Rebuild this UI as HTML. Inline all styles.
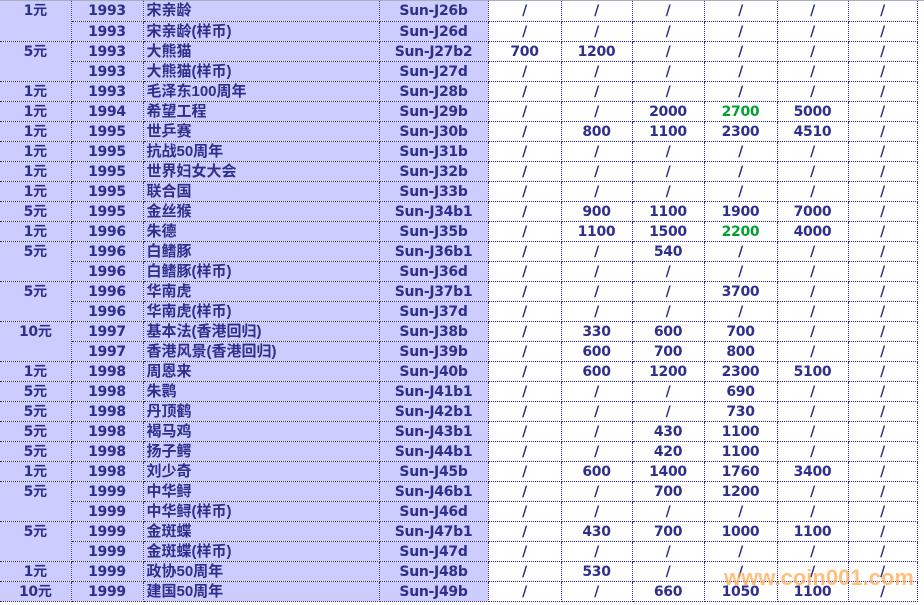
<!DOCTYPE html>
<html><head><meta charset="utf-8"><style>
body{margin:0;width:924px;height:605px;overflow:hidden;background:#fff;position:relative;font-family:"DejaVu Sans","Noto Sans CJK SC",sans-serif}
.top{position:absolute;left:0;top:0;width:924px;height:1px;background:#a8b0c0}
table{position:absolute;left:0;top:1px;border-collapse:collapse;table-layout:fixed}
tr{height:20px}
td{height:18px;padding:1px 0 0 0;border:1px dotted #2a2a9a;font-weight:bold;font-size:14px;color:#2e2e8c;text-align:center;line-height:18px;white-space:nowrap;overflow:hidden;letter-spacing:-0.3px}
td.l{background:#ccccff}
td.n{text-align:left;padding-left:3px;font-family:"Liberation Sans","Noto Sans CJK SC",sans-serif;font-size:15px;letter-spacing:0}
.g{color:#00a030}
tr td:first-child{border-left:none}
tr:first-child td{border-top:none}
.wm{position:absolute;left:724px;top:565px;width:190px;font-size:22px;font-weight:bold;color:rgba(255,165,70,0.7);font-family:"Liberation Sans",sans-serif;white-space:nowrap}
</style></head><body>
<div class="top"></div>
<table>
<colgroup><col style="width:71px"><col style="width:72px"><col style="width:236px"><col style="width:109px"><col style="width:73px"><col style="width:71px"><col style="width:72px"><col style="width:73px"><col style="width:71px"><col style="width:69px"></colgroup>
<tr><td class="l" rowspan="2" style="vertical-align:top">1元</td><td class="l">1993</td><td class="l n">宋亲龄</td><td class="l">Sun-J26b</td><td>/</td><td>/</td><td>/</td><td>/</td><td>/</td><td>/</td></tr>
<tr><td class="l">1993</td><td class="l n">宋亲龄(样币)</td><td class="l">Sun-J26d</td><td>/</td><td>/</td><td>/</td><td>/</td><td>/</td><td>/</td></tr>
<tr><td class="l" rowspan="2" style="vertical-align:top">5元</td><td class="l">1993</td><td class="l n">大熊猫</td><td class="l">Sun-J27b2</td><td>700</td><td>1200</td><td>/</td><td>/</td><td>/</td><td>/</td></tr>
<tr><td class="l">1993</td><td class="l n">大熊猫(样币)</td><td class="l">Sun-J27d</td><td>/</td><td>/</td><td>/</td><td>/</td><td>/</td><td>/</td></tr>
<tr><td class="l">1元</td><td class="l">1993</td><td class="l n">毛泽东100周年</td><td class="l">Sun-J28b</td><td>/</td><td>/</td><td>/</td><td>/</td><td>/</td><td>/</td></tr>
<tr><td class="l">1元</td><td class="l">1994</td><td class="l n">希望工程</td><td class="l">Sun-J29b</td><td>/</td><td>/</td><td>2000</td><td class="g">2700</td><td>5000</td><td>/</td></tr>
<tr><td class="l">1元</td><td class="l">1995</td><td class="l n">世乒赛</td><td class="l">Sun-J30b</td><td>/</td><td>800</td><td>1100</td><td>2300</td><td>4510</td><td>/</td></tr>
<tr><td class="l">1元</td><td class="l">1995</td><td class="l n">抗战50周年</td><td class="l">Sun-J31b</td><td>/</td><td>/</td><td>/</td><td>/</td><td>/</td><td>/</td></tr>
<tr><td class="l">1元</td><td class="l">1995</td><td class="l n">世界妇女大会</td><td class="l">Sun-J32b</td><td>/</td><td>/</td><td>/</td><td>/</td><td>/</td><td>/</td></tr>
<tr><td class="l">1元</td><td class="l">1995</td><td class="l n">联合国</td><td class="l">Sun-J33b</td><td>/</td><td>/</td><td>/</td><td>/</td><td>/</td><td>/</td></tr>
<tr><td class="l">5元</td><td class="l">1995</td><td class="l n">金丝猴</td><td class="l">Sun-J34b1</td><td>/</td><td>900</td><td>1100</td><td>1900</td><td>7000</td><td>/</td></tr>
<tr><td class="l">1元</td><td class="l">1996</td><td class="l n">朱德</td><td class="l">Sun-J35b</td><td>/</td><td>1100</td><td>1500</td><td class="g">2200</td><td>4000</td><td>/</td></tr>
<tr><td class="l" rowspan="2" style="vertical-align:top">5元</td><td class="l">1996</td><td class="l n">白鳍豚</td><td class="l">Sun-J36b1</td><td>/</td><td>/</td><td>540</td><td>/</td><td>/</td><td>/</td></tr>
<tr><td class="l">1996</td><td class="l n">白鳍豚(样币)</td><td class="l">Sun-J36d</td><td>/</td><td>/</td><td>/</td><td>/</td><td>/</td><td>/</td></tr>
<tr><td class="l" rowspan="2" style="vertical-align:top">5元</td><td class="l">1996</td><td class="l n">华南虎</td><td class="l">Sun-J37b1</td><td>/</td><td>/</td><td>/</td><td>3700</td><td>/</td><td>/</td></tr>
<tr><td class="l">1996</td><td class="l n">华南虎(样币)</td><td class="l">Sun-J37d</td><td>/</td><td>/</td><td>/</td><td>/</td><td>/</td><td>/</td></tr>
<tr><td class="l" rowspan="2" style="vertical-align:top">10元</td><td class="l">1997</td><td class="l n">基本法(香港回归)</td><td class="l">Sun-J38b</td><td>/</td><td>330</td><td>600</td><td>700</td><td>/</td><td>/</td></tr>
<tr><td class="l">1997</td><td class="l n">香港风景(香港回归)</td><td class="l">Sun-J39b</td><td>/</td><td>600</td><td>700</td><td>800</td><td>/</td><td>/</td></tr>
<tr><td class="l">1元</td><td class="l">1998</td><td class="l n">周恩来</td><td class="l">Sun-J40b</td><td>/</td><td>600</td><td>1200</td><td>2300</td><td>5100</td><td>/</td></tr>
<tr><td class="l">5元</td><td class="l">1998</td><td class="l n">朱鹮</td><td class="l">Sun-J41b1</td><td>/</td><td>/</td><td>/</td><td>690</td><td>/</td><td>/</td></tr>
<tr><td class="l">5元</td><td class="l">1998</td><td class="l n">丹顶鹤</td><td class="l">Sun-J42b1</td><td>/</td><td>/</td><td>/</td><td>730</td><td>/</td><td>/</td></tr>
<tr><td class="l">5元</td><td class="l">1998</td><td class="l n">褐马鸡</td><td class="l">Sun-J43b1</td><td>/</td><td>/</td><td>430</td><td>1100</td><td>/</td><td>/</td></tr>
<tr><td class="l">5元</td><td class="l">1998</td><td class="l n">扬子鳄</td><td class="l">Sun-J44b1</td><td>/</td><td>/</td><td>420</td><td>1100</td><td>/</td><td>/</td></tr>
<tr><td class="l">1元</td><td class="l">1998</td><td class="l n">刘少奇</td><td class="l">Sun-J45b</td><td>/</td><td>600</td><td>1400</td><td>1760</td><td>3400</td><td>/</td></tr>
<tr><td class="l" rowspan="2" style="vertical-align:top">5元</td><td class="l">1999</td><td class="l n">中华鲟</td><td class="l">Sun-J46b1</td><td>/</td><td>/</td><td>700</td><td>1200</td><td>/</td><td>/</td></tr>
<tr><td class="l">1999</td><td class="l n">中华鲟(样币)</td><td class="l">Sun-J46d</td><td>/</td><td>/</td><td>/</td><td>/</td><td>/</td><td>/</td></tr>
<tr><td class="l" rowspan="2" style="vertical-align:top">5元</td><td class="l">1999</td><td class="l n">金斑蝶</td><td class="l">Sun-J47b1</td><td>/</td><td>430</td><td>700</td><td>1000</td><td>1100</td><td>/</td></tr>
<tr><td class="l">1999</td><td class="l n">金斑蝶(样币)</td><td class="l">Sun-J47d</td><td>/</td><td>/</td><td>/</td><td>/</td><td>/</td><td>/</td></tr>
<tr><td class="l">1元</td><td class="l">1999</td><td class="l n">政协50周年</td><td class="l">Sun-J48b</td><td>/</td><td>530</td><td>/</td><td>/</td><td>/</td><td>/</td></tr>
<tr><td class="l">10元</td><td class="l">1999</td><td class="l n">建国50周年</td><td class="l">Sun-J49b</td><td>/</td><td>/</td><td>660</td><td>1050</td><td>1100</td><td>/</td></tr>
</table>
<div class="wm">www.coin001.com</div>
</body></html>
